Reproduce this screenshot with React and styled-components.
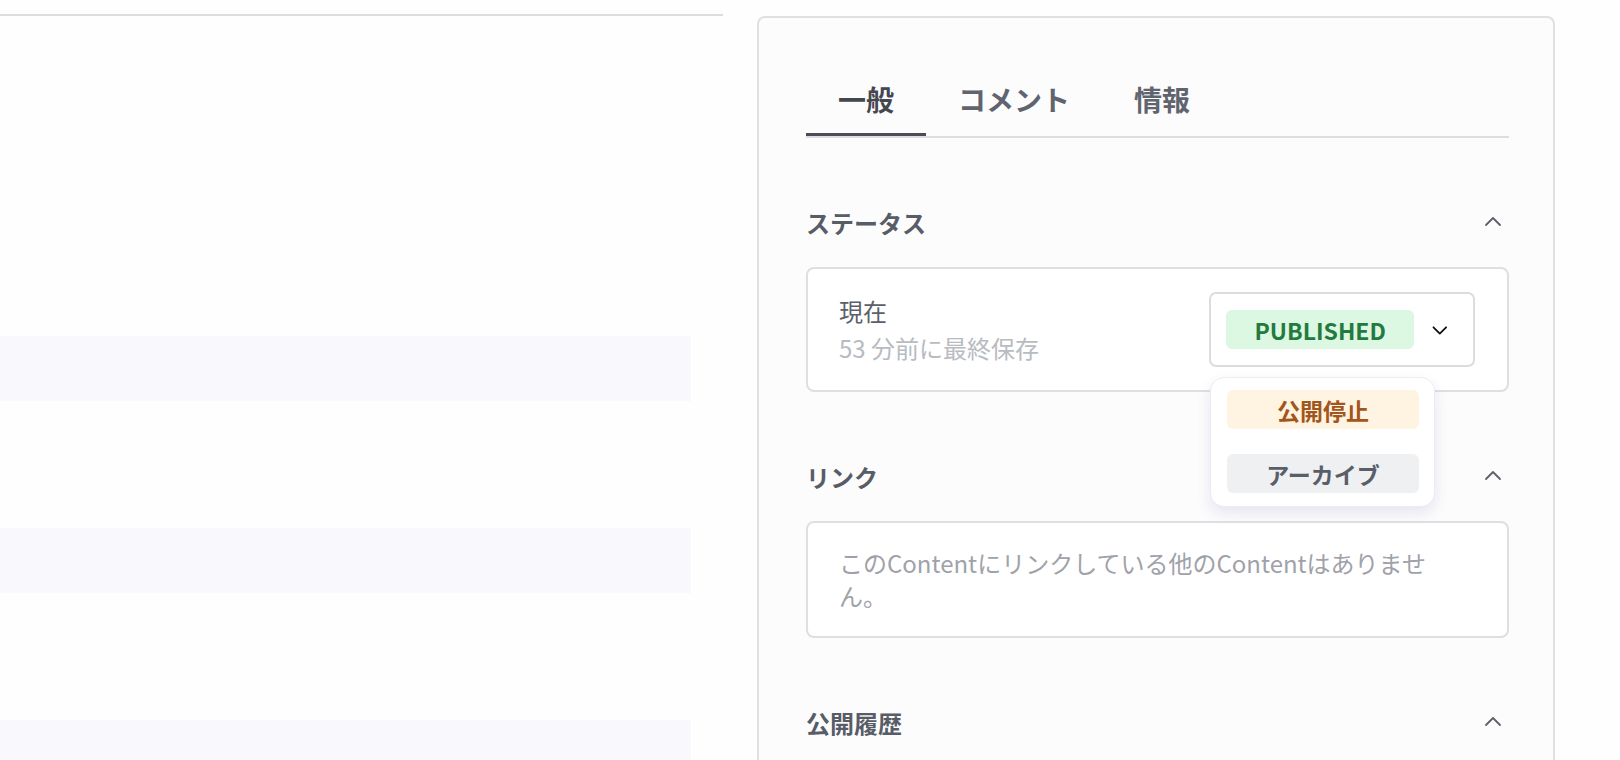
import React, { useState } from "react";
import styled, { createGlobalStyle } from "styled-components";

const GlobalStyle = createGlobalStyle`
    html, body {
        margin: 0;
        padding: 0;
        overflow: hidden;
        background: #fefefe;
        font-family: "Noto Sans CJK JP", "Noto Sans", sans-serif;
    }
    * { box-sizing: border-box; }
`;

const Page = styled.main`
    width: 1620px;
    height: 760px;
    display: flex;
    align-items: flex-start;
`;

const ListColumn = styled.section`
    width: 723px;
    margin-top: 14px;
    border-top: 2px solid #dcdcdf;
    padding-top: 320px;
`;

const ListRow = styled.div`
    width: 691px;
    height: 65px;
    margin-bottom: 127px;
    background: ${(p) => (p.$shaded ? "#f9f9fd" : "transparent")};
`;

const Panel = styled.aside`
    width: 798px;
    height: 900px;
    margin: 16px 0 0 34px;
    padding: 46px 44px 0 47px;
    background: #fcfcfd;
    border: 2px solid #e0e0e3;
    border-radius: 8px;
`;

const TabList = styled.div`
    display: flex;
    border-bottom: 2px solid #dedee2;
`;

const Tab = styled.button`
    border: none;
    background: none;
    font-family: inherit;
    font-size: 28px;
    font-weight: 700;
    line-height: 36px;
    padding: 17px 32px 16px;
    color: ${(p) => (p.$active ? "#45474f" : "#60646e")};
    border-bottom: 3px solid ${(p) => (p.$active ? "#4b4c57" : "transparent")};
    cursor: pointer;
`;

const Section = styled.section`
    margin-top: 60px;
`;

const SectionHeader = styled.div`
    height: 48px;
    display: flex;
    align-items: center;
    justify-content: space-between;
    padding-right: 4px;

    & > h3 {
        margin: 0;
        font-size: 24px;
        font-weight: 700;
        color: #585c67;
    }
`;

const Card = styled.div`
    margin-top: 21px;
    background: #fff;
    border: 2px solid #dfdfe3;
    border-radius: 8px;
    padding: ${(p) => p.$pad};
`;

const StatusRow = styled.div`
    display: flex;
    align-items: center;
    justify-content: space-between;
`;

const StatusText = styled.div`
    display: flex;
    flex-direction: column;
    gap: 1px;
    font-size: 24px;
    line-height: 36px;

    & > span:first-child {
        color: #5b5f6a;
    }
    & > span:last-child {
        color: #b8bbc1;
    }
`;

const SelectWrap = styled.div`
    position: relative;
`;

const SelectBox = styled.div`
    width: 266px;
    height: 75px;
    display: flex;
    align-items: center;
    gap: 15px;
    padding: 0 22px 0 15px;
    border: 2px solid #dcdce0;
    border-radius: 7px;
    background: #fff;
`;

const Badge = styled.div`
    width: 192px;
    height: 39px;
    display: flex;
    align-items: center;
    justify-content: center;
    border-radius: 6px;
    font-size: 23px;
    font-weight: 700;
    background: ${(p) => p.$bg};
    color: ${(p) => p.$fg};
`;

const Menu = styled.div`
    position: absolute;
    top: calc(100% + 10px);
    left: 1px;
    width: 225px;
    padding: 12px 16px 13px;
    display: flex;
    flex-direction: column;
    gap: 25px;
    background: #fff;
    border: 1px solid #ececf6;
    border-radius: 14px;
    box-shadow: 0 6px 14px rgba(90, 95, 160, 0.14);
    z-index: 2;
`;

const EmptyText = styled.p`
    margin: 0;
    font-size: 24px;
    line-height: 33px;
    color: #9fa2a9;
`;

const Chevron = ({ up, color = "#5d606a", size = 24, stroke = 1.8 }) => (
    <svg width={size} height={size} viewBox="0 0 24 24" fill="none" stroke={color} strokeWidth={stroke} strokeLinecap="round" strokeLinejoin="round">
        <path d={up ? "M5 15l7-7 7 7" : "M5 9l7 7 7-7"} />
    </svg>
);

const rows = [true, true, true];

const App = () => {
    const [tab, setTab] = useState(0);
    const tabs = ["一般", "コメント", "情報"];

    return (
        <Page>
            <GlobalStyle />
            <ListColumn>
                {rows.map((shaded, i) => (
                    <ListRow key={i} $shaded={shaded} />
                ))}
            </ListColumn>
            <Panel>
                <TabList>
                    {tabs.map((t, i) => (
                        <Tab key={t} $active={tab === i} onClick={() => setTab(i)}>{t}</Tab>
                    ))}
                </TabList>

                <Section>
                    <SectionHeader>
                        <h3>ステータス</h3>
                        <Chevron up />
                    </SectionHeader>
                    <Card $pad="23px 32px 23px 31px">
                        <StatusRow>
                            <StatusText>
                                <span>現在</span>
                                <span>53 分前に最終保存</span>
                            </StatusText>
                            <SelectWrap>
                                <SelectBox>
                                    <Badge $bg="#dcf7e2" $fg="#237a3e">PUBLISHED</Badge>
                                    <Chevron color="#111" size={22} stroke={2} />
                                </SelectBox>
                                <Menu>
                                    <Badge $bg="#fff4e1" $fg="#a2561b">公開停止</Badge>
                                    <Badge $bg="#eff0f2" $fg="#5a5e69">アーカイブ</Badge>
                                </Menu>
                            </SelectWrap>
                        </StatusRow>
                    </Card>
                </Section>

                <Section>
                    <SectionHeader>
                        <h3>リンク</h3>
                        <Chevron up />
                    </SectionHeader>
                    <Card $pad="23px 48px 24px 31px">
                        <EmptyText>このContentにリンクしている他のContentはありません。</EmptyText>
                    </Card>
                </Section>

                <Section>
                    <SectionHeader>
                        <h3>公開履歴</h3>
                        <Chevron up />
                    </SectionHeader>
                </Section>
            </Panel>
        </Page>
    );
};

export default App;
